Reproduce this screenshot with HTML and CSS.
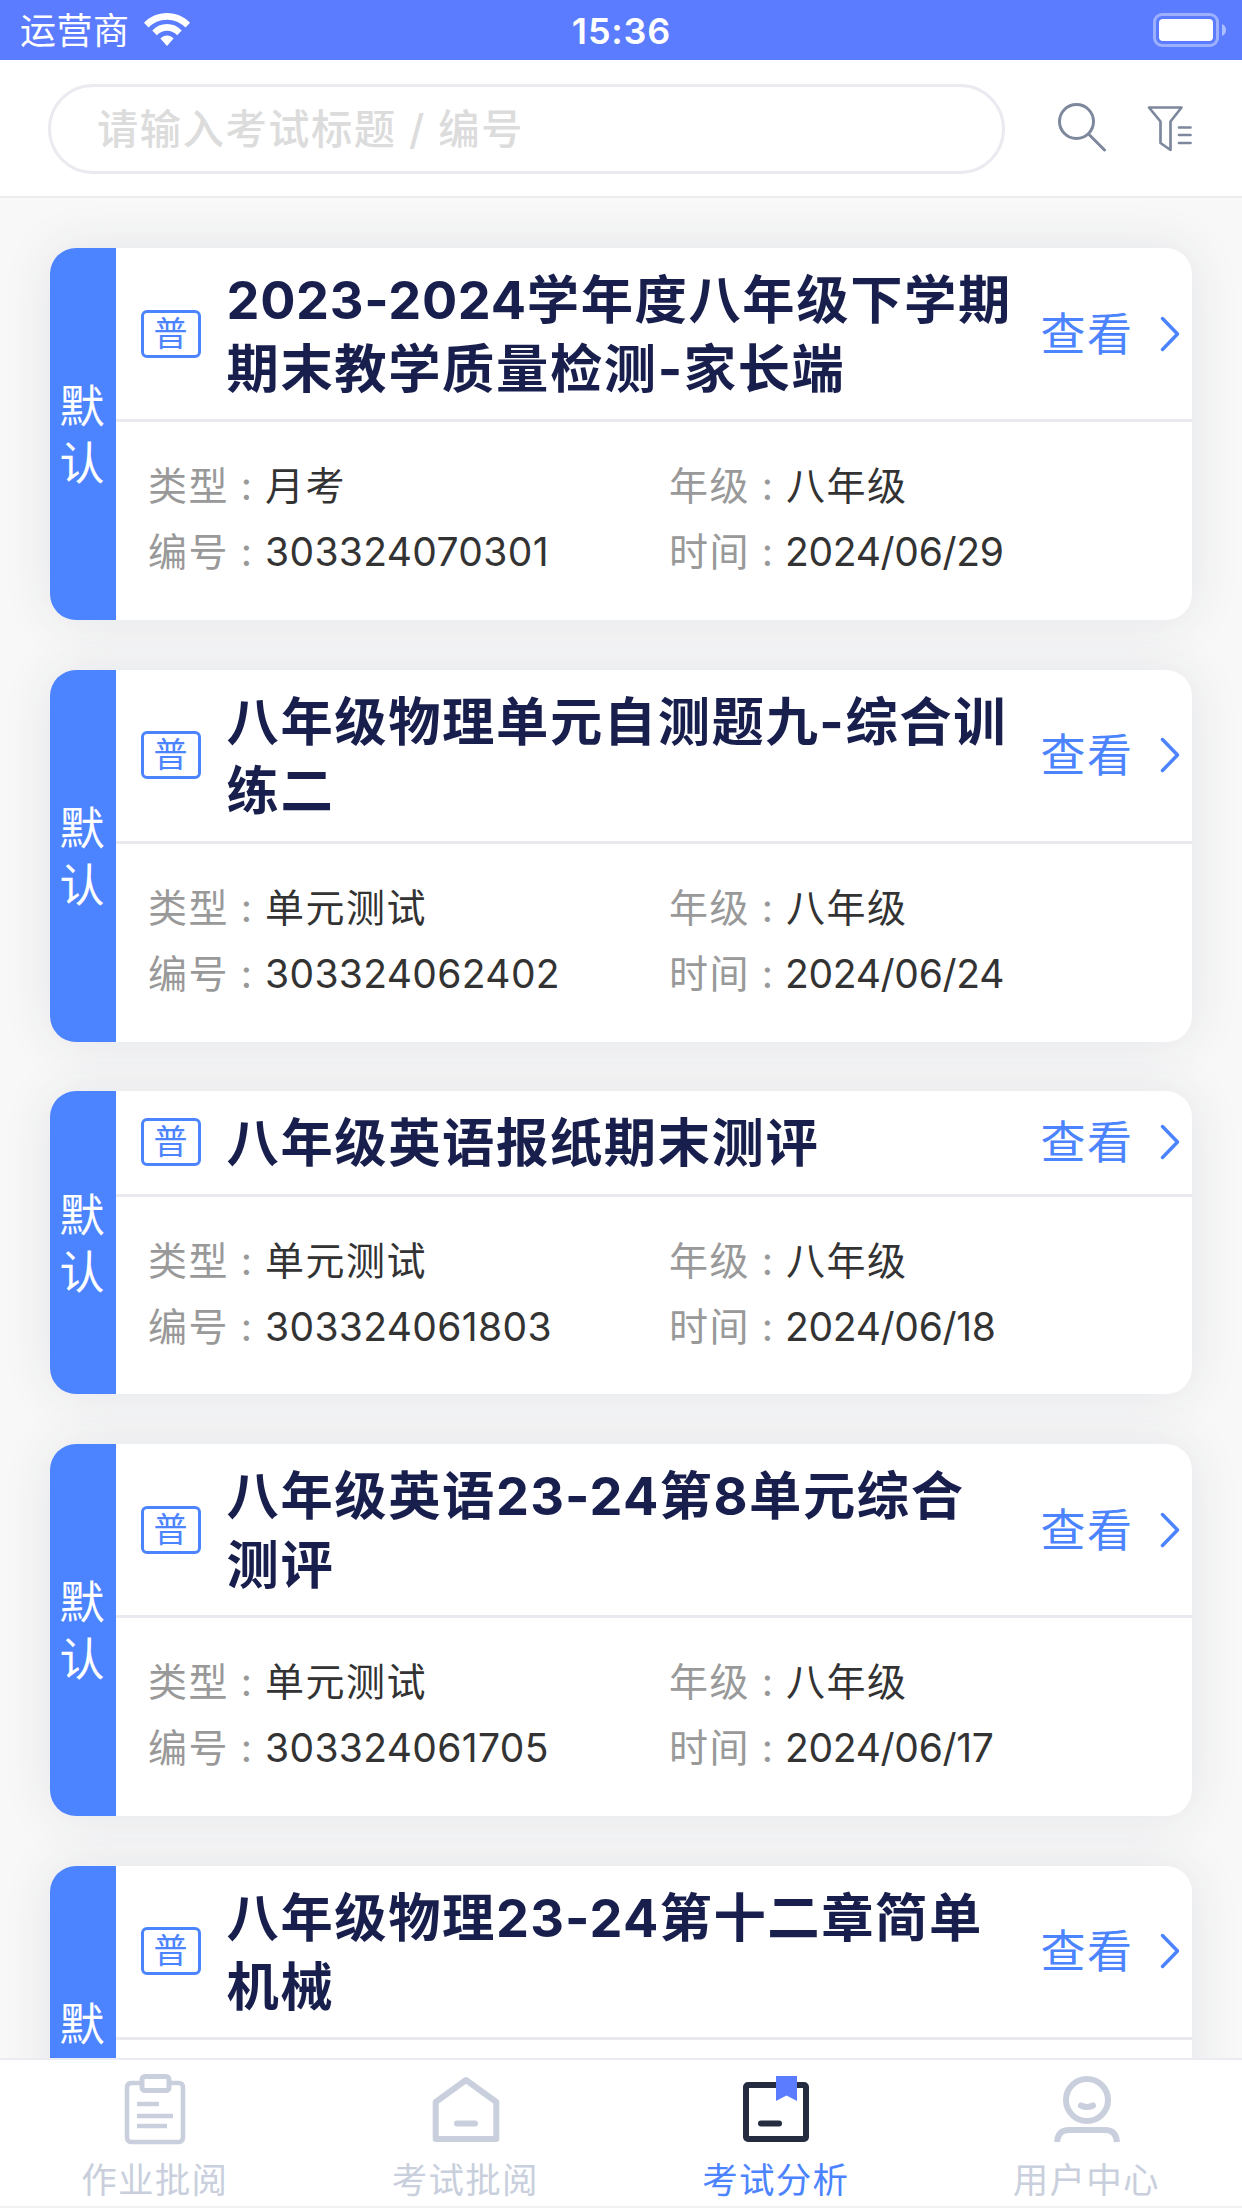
FILE: index.html
```html
<!DOCTYPE html>
<html lang="zh-CN">
<head>
<meta charset="utf-8">
<title>考试分析</title>
<link rel="stylesheet" href="styles.css">
</head>
<body>
<div class="app">
  <header class="status">
    <div class="carrier">
      <span>运营商</span>
      <svg class="wifi" width="46" height="34" viewBox="0 0 46 34" fill="#fff">
        <path d="M23 0C32 0 40 3.600 46 9.700L41.500 14.500C36.600 9.500 30.200 6.700 23 6.700S9.400 9.500 4.500 14.500L0 9.700C6 3.600 14 0 23 0Z"/>
        <path d="M23 11C28.700 11 33.800 13.200 37.700 17.400L33.200 22.200C30.400 19.400 26.900 17.800 23 17.800S15.600 19.400 12.800 22.200L8.300 17.400C12.200 13.200 17.300 11 23 11Z"/>
        <path d="M23 22.500C25.500 22.500 27.700 23.500 29.600 25.400L23 33L16.400 25.400C18.300 23.500 20.500 22.500 23 22.500Z"/>
      </svg>
    </div>
    <div class="clock">15:36</div>
    <svg class="battery" width="74" height="34" viewBox="0 0 74 34">
      <rect x="1.500" y="1.500" width="63" height="31" rx="7.500" fill="none" stroke="#fff" stroke-opacity=".4" stroke-width="3"/>
      <rect x="6" y="6" width="54" height="22" rx="4" fill="#fff"/>
      <path d="M69 11C71.500 12 73 14.200 73 17S71.500 22 69 23Z" fill="#fff" fill-opacity=".5"/>
    </svg>
  </header>

  <div class="search">
    <div class="field">请输入考试标题 / 编号</div>
    <svg class="find" width="50" height="50" viewBox="0 0 50 50" fill="none" stroke="#7e889d" stroke-width="3" stroke-linecap="round">
      <circle cx="19.500" cy="19.500" r="17"/><path d="M32 32.500L47.500 48"/>
    </svg>
    <svg class="filter" width="46" height="48" viewBox="0 0 46 48" fill="none" stroke="#7e889d" stroke-width="2.700" stroke-linecap="round" stroke-linejoin="round">
      <path d="M2 2.500H34.500L23.500 16.500V45L13.500 38V16.500Z"/><path d="M32 22.500H43.500M32 30H43.500M32 38H43.500"/>
    </svg>
  </div>

  <main class="list">
    <article class="card">
      <div class="side">默<br>认</div>
      <div class="main">
        <div class="head">
          <span class="badge">普</span>
          <h2 class="title"><span class="years">2023-2024</span>学年度八年级下学期<br>期末教学质量检测-家长端</h2>
          <span class="view">查看</span>
          <svg class="chev" width="20" height="36" viewBox="0 0 20 36"><path d="M2.500 2.500L17.500 18L2.500 33.500"/></svg>
        </div>
        <div class="info">
          <div><span class="key">类型<i>:</i></span>月考</div><div><span class="key">年级<i>:</i></span>八年级</div>
          <div><span class="key">编号<i>:</i></span><span class="num">303324070301</span></div><div><span class="key">时间<i>:</i></span><span class="date">2024/06/29</span></div>
        </div>
      </div>
    </article>

    <article class="card">
      <div class="side">默<br>认</div>
      <div class="main">
        <div class="head">
          <span class="badge">普</span>
          <h2 class="title">八年级物理单元自测题九-综合训<br>练二</h2>
          <span class="view">查看</span>
          <svg class="chev" width="20" height="36" viewBox="0 0 20 36"><path d="M2.500 2.500L17.500 18L2.500 33.500"/></svg>
        </div>
        <div class="info">
          <div><span class="key">类型<i>:</i></span>单元测试</div><div><span class="key">年级<i>:</i></span>八年级</div>
          <div><span class="key">编号<i>:</i></span><span class="num">303324062402</span></div><div><span class="key">时间<i>:</i></span><span class="date">2024/06/24</span></div>
        </div>
      </div>
    </article>

    <article class="card">
      <div class="side">默<br>认</div>
      <div class="main">
        <div class="head">
          <span class="badge">普</span>
          <h2 class="title">八年级英语报纸期末测评</h2>
          <span class="view">查看</span>
          <svg class="chev" width="20" height="36" viewBox="0 0 20 36"><path d="M2.500 2.500L17.500 18L2.500 33.500"/></svg>
        </div>
        <div class="info">
          <div><span class="key">类型<i>:</i></span>单元测试</div><div><span class="key">年级<i>:</i></span>八年级</div>
          <div><span class="key">编号<i>:</i></span><span class="num">303324061803</span></div><div><span class="key">时间<i>:</i></span><span class="date">2024/06/18</span></div>
        </div>
      </div>
    </article>

    <article class="card">
      <div class="side">默<br>认</div>
      <div class="main">
        <div class="head">
          <span class="badge">普</span>
          <h2 class="title">八年级英语<span class="term">23-24</span>第8单元综合<br>测评</h2>
          <span class="view">查看</span>
          <svg class="chev" width="20" height="36" viewBox="0 0 20 36"><path d="M2.500 2.500L17.500 18L2.500 33.500"/></svg>
        </div>
        <div class="info">
          <div><span class="key">类型<i>:</i></span>单元测试</div><div><span class="key">年级<i>:</i></span>八年级</div>
          <div><span class="key">编号<i>:</i></span><span class="num">303324061705</span></div><div><span class="key">时间<i>:</i></span><span class="date">2024/06/17</span></div>
        </div>
      </div>
    </article>

    <article class="card cut">
      <div class="side">默</div>
      <div class="main">
        <div class="head">
          <span class="badge">普</span>
          <h2 class="title">八年级物理<span class="term">23-24</span>第十二章简单<br>机械</h2>
          <span class="view">查看</span>
          <svg class="chev" width="20" height="36" viewBox="0 0 20 36"><path d="M2.500 2.500L17.500 18L2.500 33.500"/></svg>
        </div>
      </div>
    </article>
  </main>

  <nav class="tabs">
    <div class="tab">
      <svg width="70" height="72" viewBox="0 0 70 72" fill="none" stroke="#c9cfdc" stroke-width="4.500">
        <path d="M20 10H11.500Q7 10 7 15V64Q7 69 11.500 69H58.500Q63 69 63 64V15Q63 10 58.500 10H50"/>
        <rect x="22" y="3.500" width="27" height="14" rx="3" stroke-width="5"/>
        <path d="M17 31H39M17 43H53M17 53H47"/>
      </svg>
      <span>作业批阅</span>
    </div>
    <div class="tab">
      <svg width="70" height="72" viewBox="0 0 70 72" fill="none" stroke="#c9cfdc" stroke-width="6" stroke-linejoin="round">
        <path d="M4.700 29L35 7L65.300 29V66H4.700Z"/><path d="M26 50.500H44" stroke-linecap="round"/>
      </svg>
      <span>考试批阅</span>
    </div>
    <div class="tab active">
      <svg width="70" height="72" viewBox="0 0 70 72" fill="none">
        <rect x="5" y="12" width="60" height="54" rx="2" stroke="#262c3f" stroke-width="6"/>
        <path d="M20 50.500H38" stroke="#262c3f" stroke-width="6" stroke-linecap="round"/>
        <path d="M35 3H56V28L45.500 22.500L35 28Z" fill="#5b7cff"/>
      </svg>
      <span>考试分析</span>
    </div>
    <div class="tab">
      <svg width="70" height="72" viewBox="0 0 70 72" fill="none" stroke="#c9cfdc" stroke-width="6">
        <circle cx="35" cy="27" r="21"/><path d="M29 32.500Q35 35.500 41 32.500" stroke-linecap="round"/>
        <path d="M5 69Q6 57 17 57H53Q64 57 65 69"/>
      </svg>
      <span>用户中心</span>
    </div>
  </nav>
</div>
</body>
</html>
```
FILE: styles.css
```css
* { box-sizing: border-box; }
body { margin: 0; background: #f8f8f8; font-family: Inter, "Noto Sans CJK SC", sans-serif; }
svg { display: block; flex: none; }
.app { width: 1242px; height: 2208px; display: flex; flex-direction: column; overflow: hidden; }

.status { height: 60px; flex: none; background: #5b7cff; color: #fff; display: grid; grid-template-columns: 1fr auto 1fr; align-items: center; padding: 0 15px 0 20px; }
.carrier { display: flex; align-items: center; gap: 14px; font-size: 36px; line-height: 60px; letter-spacing: .5px; }
.carrier span { padding-top: 2px; line-height: 58px; }
.clock { font-size: 36px; font-weight: 600; letter-spacing: .8px; padding-top: 1px; margin: 0 2px 0 -2px; }
.battery { justify-self: end; }

.search { height: 138px; flex: none; background: #fff; border-bottom: 2px solid #ececee; display: flex; align-items: center; padding: 0 48px; }
.field { width: 957px; height: 90px; margin-top: 2px; border: 3px solid #eaeaf1; border-radius: 45px; padding-left: 46px; font-size: 41.300px; line-height: 84px; letter-spacing: 1.500px; color: #dcdcdc; font-weight: 500; }
.find { margin: -2px 0 0 52px; }
.filter { margin: 1px 0 0 40px; }

.list { flex: 1; min-height: 0; overflow: hidden; display: flex; flex-direction: column; gap: 49.700px; padding: 50px 50px 0; }
.card { flex: none; display: flex; border-radius: 26px; background: #fff; box-shadow: 0 0 50px rgba(35, 45, 85, .1); }
.side { width: 66px; flex: none; display: flex; align-items: center; justify-content: center; padding: 2px 2px 0 0; border-radius: 26px 0 0 26px; background: #4c84ff; color: #fff; font-size: 45px; line-height: 57px; }
.main { flex: 1; }
.head { border-bottom: 3px solid #e9e9f0; display: flex; align-items: center; padding: 17px 12px 16.300px 25px; }
.badge { width: 60px; height: 48px; flex: none; margin-top: -1px; border: 3px solid #4c84ff; border-radius: 6px; color: #4c84ff; font-size: 34px; line-height: 41px; text-align: center; padding-right: 1px; }
.title { width: 786px; margin: 1px 0 -1px 25.500px; color: #181f4d; font-size: 52.300px; line-height: 69px; font-weight: 700; letter-spacing: 1.600px; white-space: nowrap; }
.years { letter-spacing: .7px; }
.term { letter-spacing: 1.200px; }
.view { margin: 1px 0 0 28px; color: #4c84ff; font-size: 45px; line-height: 60px; letter-spacing: 1.500px; }
.chev { margin: -1px 0 0 auto; fill: none; stroke: #4c84ff; stroke-width: 3.500; stroke-linecap: round; stroke-linejoin: round; }
.info { height: 197.700px; padding: 31px 0 0 32px; display: grid; grid-template-columns: 521px 1fr; grid-auto-rows: 66px; line-height: 66px; font-size: 39px; letter-spacing: 1.500px; color: #333; }
.num { letter-spacing: .35px; }
.date { letter-spacing: -.3px; margin-left: -1px; }
.key { color: #999; }
.key i { display: inline-block; width: 36px; text-align: center; font-style: normal; }
.cut { height: 372px; }
.cut .side { padding-bottom: 57px; }

.tabs { height: 150px; flex: none; background: #fff; border-top: 2px solid #ebecf1; border-bottom: 2px solid #f0f1f3; display: grid; grid-template-columns: repeat(4, 1fr); }
.tab { display: flex; flex-direction: column; align-items: center; padding-top: 13px; color: #c9cfdc; }
.tab span { font-size: 35.500px; line-height: 60px; letter-spacing: 1.300px; margin: 6px 0 -2px -1px; }
.active { color: #4c84ff; }
```
